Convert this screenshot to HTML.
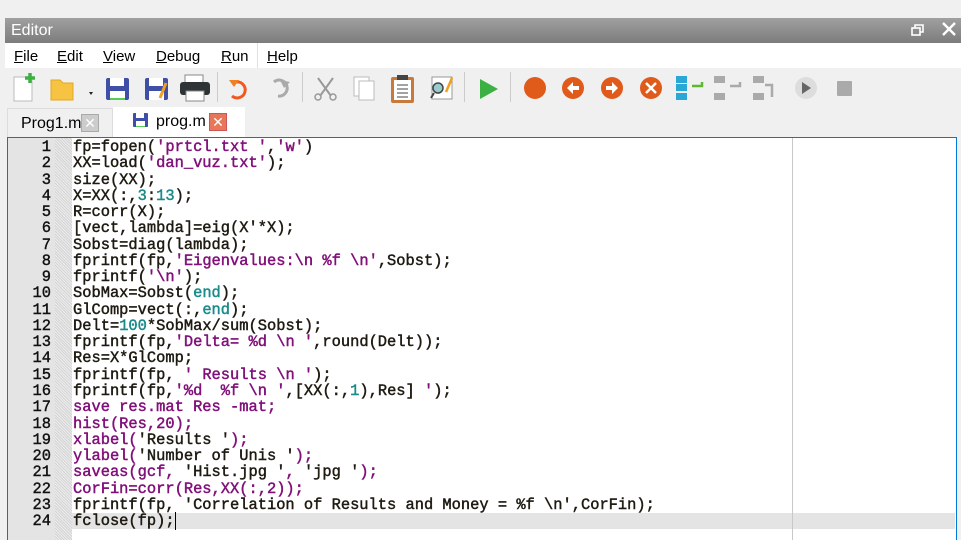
<!DOCTYPE html>
<html><head><meta charset="utf-8"><style>
*{margin:0;padding:0;box-sizing:border-box}
body{width:961px;height:540px;background:#f0f0f0;position:relative;overflow:hidden;font-family:"Liberation Sans",sans-serif}
.abs{position:absolute}
#title{left:5px;top:18px;width:956px;height:25px;background:linear-gradient(#a0a0a0,#7c7c7c);color:#fff;font-size:16px;line-height:25px;padding-left:6px}
#menu{left:5px;top:43px;width:956px;height:25px;background:#fff;font-size:15px;line-height:27px}
#menu span{position:absolute;top:0}
#tb{left:5px;top:68px;width:956px;height:40px;background:#f0f0f0}
.sep{position:absolute;top:72px;width:1px;height:30px;background:#ccc}
.tab{position:absolute;top:108px;height:29px;font-size:16px;line-height:29px}
#ed{left:7px;top:137px;width:950px;height:403px;border:1px solid #0078d7;border-bottom:none;background:#fff}
#gut{left:8px;top:138px;width:47px;height:402px;background:#e4e4e4}
#tex{left:55px;top:138px;width:17px;height:402px;background:repeating-linear-gradient(45deg,#d4d4d4 0 1px,#ececec 1px 2px)}
#nums{left:8px;top:139px;width:43px;text-align:right;font-family:"Liberation Mono",monospace;font-size:15.4px;line-height:16.26px;color:#111;-webkit-text-stroke:0.4px #111}
#code{left:73px;top:139px;font-family:"Liberation Mono",monospace;font-size:15.4px;line-height:16.26px;color:#1e1a12;white-space:pre;-webkit-text-stroke:0.45px currentColor}
.s{color:#80107a}.n{color:#1a8a8a}
#hl{left:72px;top:513px;width:883px;height:16px;background:#e4e4e4}
#mg{left:792px;top:138px;width:1px;height:402px;background:#c8c8c8}
</style></head><body>
<div id="title" class="abs">Editor</div>
<svg class="abs" style="left:910px;top:22px" width="16" height="16"><rect x="2" y="6" width="8" height="7" fill="none" stroke="#fff" stroke-width="1.6"/><path d="M5 6V3h8v7h-3" fill="none" stroke="#fff" stroke-width="1.6"/></svg>
<svg class="abs" style="left:941px;top:21px" width="16" height="16"><path d="M2 2L14 14M14 2L2 14" stroke="#fff" stroke-width="2.4"/></svg>
<div id="menu" class="abs"><span style="left:9px"><u>F</u>ile</span><span style="left:52px"><u>E</u>dit</span><span style="left:98px"><u>V</u>iew</span><span style="left:151px"><u>D</u>ebug</span><span style="left:216px"><u>R</u>un</span><span style="left:262px"><u>H</u>elp</span></div>
<div class="abs" style="left:257px;top:43px;width:1px;height:26px;background:#e0e0e0"></div>
<div id="tb" class="abs"></div>
<svg class="abs" style="left:0;top:68px" width="961" height="40">
<path d="M14 9h14l4 4v20H14z" fill="#fff" stroke="#bbb"/><path d="M30 5v10M25 10h10" stroke="#3cb043" stroke-width="3.5"/>
<path d="M51 12h9l3 3h10v17H51z" fill="#f6c343" stroke="#e0a820"/><path d="M89 24l2 3 2-3z" fill="#222"/>
<rect x="106" y="10" width="23" height="22" rx="2" fill="#3f4fa8"/><rect x="110" y="10" width="14" height="8" fill="#fff"/><rect x="110" y="23" width="15" height="9" fill="#fff"/><rect x="110" y="30" width="15" height="2" fill="#5c5"/>
<rect x="145" y="10" width="23" height="22" rx="2" fill="#3f4fa8"/><rect x="149" y="10" width="14" height="8" fill="#fff"/><rect x="149" y="23" width="15" height="9" fill="#fff"/><path d="M160 30l6-15" stroke="#f0a020" stroke-width="3"/>
<rect x="185" y="7" width="18" height="8" fill="#fff" stroke="#888"/><rect x="180" y="14" width="30" height="13" rx="3" fill="#2e3436"/><rect x="186" y="23" width="18" height="10" fill="#fff" stroke="#888"/>
<path d="M236 14a8 8 0 1 1 -4 14" fill="none" stroke="#f05a20" stroke-width="3"/><path d="M229 12l10 0-5 7z" fill="#f08020"/>
<path d="M286 14a8 8 0 1 0 4 14" fill="none" stroke="#aaa" stroke-width="3" transform="rotate(180 282 21)"/><path d="M280 12l10 2-6 6z" fill="#aaa"/>
<path d="M318 10l13 18M333 10l-13 18" stroke="#999" stroke-width="2"/><circle cx="318" cy="29" r="3" fill="none" stroke="#999" stroke-width="1.5"/><circle cx="333" cy="29" r="3" fill="none" stroke="#999" stroke-width="1.5"/>
<rect x="354" y="9" width="15" height="19" fill="#fff" stroke="#bbb"/><rect x="359" y="13" width="15" height="19" fill="#fff" stroke="#bbb"/>
<rect x="391" y="9" width="23" height="26" rx="2" fill="#c87a3c"/><rect x="394" y="12" width="17" height="20" fill="#fff"/><rect x="397" y="7" width="11" height="5" fill="#444"/><path d="M397 17h11M397 21h11M397 25h11M397 29h11" stroke="#444"/>
<rect x="432" y="9" width="20" height="22" fill="#fff" stroke="#999"/><circle cx="438" cy="20" r="5" fill="#9cc" stroke="#444" stroke-width="1.5"/><path d="M434 25l-3 5" stroke="#444" stroke-width="2"/><path d="M446 24l6-14" stroke="#f0a020" stroke-width="2.5"/>
<path d="M480 11l18 10-18 10z" fill="#3cb043"/>
<circle cx="535" cy="20" r="11" fill="#e05a1a"/>
<circle cx="573" cy="20" r="11" fill="#e05a1a"/><path d="M567 20l6-6v4h6v4h-6v4z" fill="#fff"/>
<circle cx="612" cy="20" r="11" fill="#e05a1a"/><path d="M618 20l-6-6v4h-6v4h6v4z" fill="#fff"/>
<circle cx="651" cy="20" r="11" fill="#e05a1a"/><path d="M646 15l10 10M656 15l-10 10" stroke="#fff" stroke-width="2.5"/>
<rect x="676" y="8" width="11" height="7" fill="#29a8d8"/><rect x="676" y="16" width="11" height="7" fill="#29a8d8"/><rect x="676" y="25" width="11" height="7" fill="#29a8d8"/><path d="M702 14v4h-10" fill="none" stroke="#5cb82c" stroke-width="2.5"/>
<rect x="714" y="8" width="11" height="7" fill="#aaa"/><rect x="714" y="25" width="11" height="7" fill="#aaa"/><path d="M740 14v4h-10" fill="none" stroke="#aaa" stroke-width="2.5"/>
<rect x="753" y="8" width="11" height="7" fill="#aaa"/><rect x="753" y="25" width="11" height="7" fill="#aaa"/><path d="M765 17h7v12" fill="none" stroke="#aaa" stroke-width="2.5"/>
<circle cx="806" cy="20" r="11" fill="#ddd"/><path d="M802 14l9 6-9 6z" fill="#666"/>
<rect x="837" y="13" width="15" height="15" rx="1" fill="#aaa"/>
</svg>
<div class="sep" style="left:217px"></div><div class="sep" style="left:302px"></div><div class="sep" style="left:464px"></div><div class="sep" style="left:510px"></div>
<div class="tab" style="left:7px;width:106px;background:#f0f0f0;border:1px solid #ddd;border-bottom:none;padding-left:13px">Prog1.m</div>
<div class="abs" style="left:81px;top:114px;width:18px;height:18px;background:#ccc;border:1px solid #aaa;color:#fff;text-align:center;font-size:14px;line-height:16px">✕</div>
<div class="tab" style="left:113px;width:132px;background:#fff;top:107px;height:30px;padding-left:43px">prog.m</div>
<svg class="abs" style="left:133px;top:113px" width="15" height="15"><rect width="15" height="14" rx="1" fill="#3f4fa8"/><rect x="3" width="8" height="5" fill="#fff"/><rect x="3" y="8" width="9" height="6" fill="#fff"/><rect x="3" y="13" width="9" height="1" fill="#5c5"/></svg>
<div class="abs" style="left:209px;top:113px;width:18px;height:18px;background:#e8775a;border:1px solid #c55;color:#fff;text-align:center;font-size:14px;line-height:16px">✕</div>
<div id="ed" class="abs"></div>
<div id="hl" class="abs"></div>
<div id="mg" class="abs"></div>
<div id="gut" class="abs"></div>
<div id="tex" class="abs"></div>
<div id="nums" class="abs">1<br>2<br>3<br>4<br>5<br>6<br>7<br>8<br>9<br>10<br>11<br>12<br>13<br>14<br>15<br>16<br>17<br>18<br>19<br>20<br>21<br>22<br>23<br>24</div>
<div id="code" class="abs">fp=fopen(<span class="s">'prtcl.txt '</span>,<span class="s">'w'</span>)
XX=load(<span class="s">'dan_vuz.txt'</span>);
size(XX);
X=XX(:,<span class="n">3</span>:<span class="n">13</span>);
R=corr(X);
[vect,lambda]=eig(X'*X);
Sobst=diag(lambda);
fprintf(fp,<span class="s">'Eigenvalues:\n %f \n'</span>,Sobst);
fprintf(<span class="s">'\n'</span>);
SobMax=Sobst(<span class="n">end</span>);
GlComp=vect(:,<span class="n">end</span>);
Delt=<span class="n">100</span>*SobMax/sum(Sobst);
fprintf(fp,<span class="s">'Delta= %d \n '</span>,round(Delt));
Res=X*GlComp;
fprintf(fp, <span class="s">' Results \n '</span>);
fprintf(fp,<span class="s">'%d  %f \n '</span>,[XX(:,<span class="n">1</span>),Res] <span class="s">'</span>);
<span class="s">save res.mat Res -mat;</span>
<span class="s">hist(Res,20);</span>
<span class="s">xlabel(</span>'Results '<span class="s">);</span>
<span class="s">ylabel(</span>'Number of Unis '<span class="s">);</span>
<span class="s">saveas(gcf, </span>'Hist.jpg '<span class="s">, </span>'jpg '<span class="s">);</span>
<span class="s">CorFin=corr(Res,XX(:,2));</span>
fprintf(fp, 'Correlation of Results and Money = %f \n',CorFin);
fclose(fp);<span style="border-left:1px solid #000"></span></div>
</body></html>
